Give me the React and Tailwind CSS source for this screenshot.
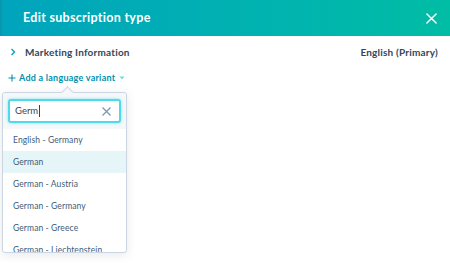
import React from "react";

const items = [
  "English - Germany",
  "German",
  "German - Austria",
  "German - Germany",
  "German - Greece",
  "German - Liechtenstein",
];

export default function App() {
  return (
    <div
      className="w-[450px] h-[265px] overflow-hidden bg-white relative"
      style={{ fontFamily: "Lato, 'Open Sans', sans-serif" }}
    >
      <div className="h-[36px] flex items-center justify-between pl-[21px] pr-[12px] bg-gradient-to-r from-[#00a4bd] to-[#00bda5] border-l-2 border-[#0a97ad]">
        <span className="text-white font-bold text-[12.5px] tracking-[0.3px]">Edit subscription type</span>
        <svg width="11" height="11" viewBox="0 0 12 12" className="mr-[1px]">
          <path d="M1 1 L11 11 M11 1 L1 11" stroke="white" strokeWidth="1.6" strokeLinecap="round" />
        </svg>
      </div>
      <div className="h-[32px] flex items-center justify-between pl-[10px] pr-[12px]">
        <div className="flex items-center">
          <svg width="6" height="8" viewBox="0 0 6 8" className="mr-[9px]">
            <path d="M1.5 1 L4.5 4 L1.5 7" fill="none" stroke="#00a4bd" strokeWidth="1.4" />
          </svg>
          <span className="text-[#33475b] font-bold text-[10px] tracking-[0.2px]">Marketing Information</span>
        </div>
        <span className="text-[#33475b] font-bold text-[10px] tracking-[0.2px]">English (Primary)</span>
      </div>
      <div className="h-[20px] flex items-center pl-[8px] text-[#0091ae] font-bold text-[9px]">
        <svg width="8" height="8" viewBox="0 0 8 8" className="mr-[3px]">
          <path d="M4 0.5 V7.5 M0.5 4 H7.5" stroke="#0091ae" strokeWidth="1.1" />
        </svg>
        <span className="tracking-[0.25px]">Add a language variant</span>
        <svg width="6" height="4" viewBox="0 0 6 4" className="ml-[4px]">
          <path d="M0.5 0.5 L5.5 0.5 L3 3.5 Z" fill="#7fd1de" />
        </svg>
      </div>
      <div className="relative ml-[2px] mt-[4px] w-[125px] bg-white border border-[#cbd6e2] rounded-[3px] shadow-[0_2px_10px_rgba(45,62,80,0.12)]">
        <div className="absolute -top-[5px] left-[60px] w-[9px] h-[9px] rotate-45 bg-[#f5f8fa] border-l border-t border-[#cbd6e2]"></div>
        <div className="relative bg-[#f5f8fa] px-[5px] pt-[6px] pb-[6px] rounded-t-[3px]">
          <div className="h-[24px] flex items-center justify-between bg-white border-2 border-[#4fd9ea] rounded-[3px] pl-[5px] pr-[8px] shadow-[0_0_3px_rgba(0,208,228,0.5)]">
            <span className="text-[#33475b] text-[9.5px]">
              Germ<span className="inline-block w-[1px] h-[12px] bg-[#33475b] align-middle ml-[1px]"></span>
            </span>
            <svg width="9" height="9" viewBox="0 0 9 9">
              <path d="M0.5 0.5 L8.5 8.5 M8.5 0.5 L0.5 8.5" stroke="#7c98b6" strokeWidth="1.3" />
            </svg>
          </div>
        </div>
        <div className="h-[123px] overflow-hidden">
          {items.map((it, i) => (
            <div
              key={it}
              className={`h-[22px] flex items-center pl-[10px] text-[8.5px] tracking-[0.1px] text-[#425b76] ${i === 1 ? "bg-[#e5f5f8]" : ""}`}
            >
              {it}
            </div>
          ))}
        </div>
      </div>
    </div>
  );
}
